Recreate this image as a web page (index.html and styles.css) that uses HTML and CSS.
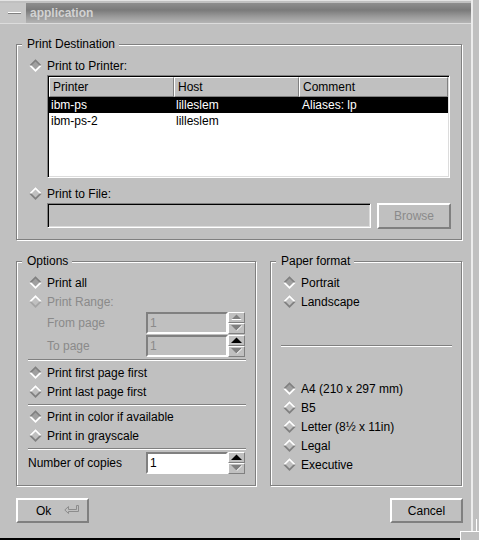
FILE: index.html
```html
<!DOCTYPE html>
<html>
<head>
<meta charset="utf-8">
<title>application</title>
<link rel="stylesheet" href="styles.css">
</head>
<body>
<svg class="defs" width="0" height="0" aria-hidden="true">
  <defs>
    <symbol id="r-on" viewBox="0 0 13 13">
      <polygon points="0,6.5 6.5,0 13,6.5 6.5,13" fill="#ffffff"/>
      <polygon points="0,6.5 6.5,0 13,6.5" fill="#808080"/>
      <polygon points="2.5,6.5 6.5,2.5 10.5,6.5 6.5,10.5" fill="#a0a0a0"/>
    </symbol>
    <symbol id="r-off" viewBox="0 0 13 13">
      <polygon points="0,6.5 6.5,0 13,6.5 6.5,13" fill="#808080"/>
      <polygon points="0,6.5 6.5,0 13,6.5" fill="#ffffff"/>
      <polygon points="2.5,6.5 6.5,2.5 10.5,6.5 6.5,10.5" fill="#c0c0c0"/>
    </symbol>
    <symbol id="r-dis" viewBox="0 0 13 13">
      <polygon points="0,6.5 6.5,0 13,6.5 6.5,13" fill="#a4a4a4"/>
      <polygon points="0,6.5 6.5,0 13,6.5" fill="#ffffff"/>
      <polygon points="2.5,6.5 6.5,2.5 10.5,6.5 6.5,10.5" fill="#c0c0c0"/>
    </symbol>
    <symbol id="t-up" viewBox="0 0 11 6">
      <polygon points="0,6 5.5,0.5 11,6" fill="#808080"/>
      <polyline points="0.5,5.5 10.5,5.5" stroke="#ffffff" fill="none"/>
    </symbol>
    <symbol id="t-up-on" viewBox="0 0 11 6">
      <polygon points="0,6 5.5,0.5 11,6" fill="#000000"/>
    </symbol>
    <symbol id="t-down" viewBox="0 0 11 6">
      <polygon points="0,0 11,0 5.5,5.5" fill="#808080"/>
      <polyline points="11,0.5 5.5,5.8" stroke="#ffffff" fill="none"/>
    </symbol>
  </defs>
</svg>

<div class="window">
  <div class="main">
    <div class="titlebar">
      <div class="tb-menu"><span class="tb-dash"></span></div>
      <div class="tb-title">application</div>
    </div>

    <div class="client">
      <div class="group g-dest">
        <span class="legend">Print Destination</span>
        <div class="radio"><svg class="rd"><use href="#r-on"/></svg><span>Print to Printer:</span></div>
        <div class="list sunken">
          <div class="lhead">
            <div class="hcell c1">Printer</div>
            <div class="hcell c2">Host</div>
            <div class="hcell c3">Comment</div>
          </div>
          <div class="lrow sel"><span class="c1">ibm-ps</span><span class="c2">lilleslem</span><span class="c3">Aliases: lp</span></div>
          <div class="lrow"><span class="c1">ibm-ps-2</span><span class="c2">lilleslem</span><span class="c3"></span></div>
        </div>
        <div class="radio r-file"><svg class="rd"><use href="#r-off"/></svg><span>Print to File:</span></div>
        <div class="file-row">
          <div class="file-field sunken"></div>
          <div class="btn browse">Browse</div>
        </div>
      </div>

      <div class="lower">
        <div class="group g-opts">
          <span class="legend">Options</span>
          <div class="radio"><svg class="rd"><use href="#r-on"/></svg><span>Print all</span></div>
          <div class="radio dis"><svg class="rd"><use href="#r-dis"/></svg><span>Print Range:</span></div>
          <div class="spinrow">
            <span class="lbl dis">From page</span>
            <div class="field dis">1</div>
            <div class="spin">
              <div class="sbtn"><svg class="tri"><use href="#t-up"/></svg></div>
              <div class="sbtn"><svg class="tri"><use href="#t-down"/></svg></div>
            </div>
          </div>
          <div class="spinrow">
            <span class="lbl dis">To page</span>
            <div class="field dis">1</div>
            <div class="spin">
              <div class="sbtn"><svg class="tri"><use href="#t-up-on"/></svg></div>
              <div class="sbtn"><svg class="tri"><use href="#t-down"/></svg></div>
            </div>
          </div>
          <div class="sep s1"></div>
          <div class="radio"><svg class="rd"><use href="#r-on"/></svg><span>Print first page first</span></div>
          <div class="radio"><svg class="rd"><use href="#r-off"/></svg><span>Print last page first</span></div>
          <div class="sep s2"></div>
          <div class="radio"><svg class="rd"><use href="#r-on"/></svg><span>Print in color if available</span></div>
          <div class="radio"><svg class="rd"><use href="#r-off"/></svg><span>Print in grayscale</span></div>
          <div class="sep s2"></div>
          <div class="spinrow copies">
            <span class="lbl">Number of copies</span>
            <div class="field white">1</div>
            <div class="spin">
              <div class="sbtn"><svg class="tri"><use href="#t-up-on"/></svg></div>
              <div class="sbtn"><svg class="tri"><use href="#t-down"/></svg></div>
            </div>
          </div>
        </div>

        <div class="group g-paper">
          <span class="legend">Paper format</span>
          <div class="radio"><svg class="rd"><use href="#r-on"/></svg><span>Portrait</span></div>
          <div class="radio"><svg class="rd"><use href="#r-off"/></svg><span>Landscape</span></div>
          <div class="sep sp"></div>
          <div class="radio"><svg class="rd"><use href="#r-on"/></svg><span>A4 (210 x 297 mm)</span></div>
          <div class="radio"><svg class="rd"><use href="#r-off"/></svg><span>B5</span></div>
          <div class="radio"><svg class="rd"><use href="#r-off"/></svg><span>Letter (8½ x 11in)</span></div>
          <div class="radio"><svg class="rd"><use href="#r-off"/></svg><span>Legal</span></div>
          <div class="radio"><svg class="rd"><use href="#r-off"/></svg><span>Executive</span></div>
        </div>
      </div>

      <div class="buttons">
        <div class="btn ok"><span>Ok</span>
          <svg class="ret" width="16" height="10" viewBox="0 0 16 10"><path d="M4.5 1.5 L0.8 5 L4.5 8.5 V6.5 H14.5 V0.5 H12.5 V4.5 H4.5 Z" fill="none" stroke="#8c8c8c" stroke-width="1"/></svg>
        </div>
        <div class="btn cancel">Cancel</div>
      </div>
    </div>
  </div>
  <div class="rframe"></div>
</div>
</body>
</html>
```

FILE: styles.css
```css
* { box-sizing: border-box; }

html, body {
  margin: 0;
  padding: 0;
}

body {
  width: 479px;
  height: 540px;
  overflow: hidden;
  background: #c0c0c0;
  font-family: "Liberation Sans", Arial, sans-serif;
  font-size: 12px;
  color: #000;
}

.defs {
  position: absolute;
  width: 0;
  height: 0;
}

.window {
  position: relative;
  display: flex;
  width: 479px;
  height: 540px;
  border-bottom: 2px solid #000;
}

/* resize grip corner of the frame */
.window::before {
  content: "";
  position: absolute;
  left: 476px;
  top: 519px;
  width: 1px;
  height: 12px;
  background: #fff;
}
.window::after {
  content: "";
  position: absolute;
  left: 460px;
  top: 531px;
  width: 19px;
  height: 9px;
  background: #c0c0c0;
  border-top: 1px solid #fff;
  border-left: 1px solid #fff;
}

.main {
  width: 471px;
  border-top: 1px solid #e4e4e4;
  padding-top: 2px;
  display: flex;
  flex-direction: column;
}

.rframe {
  width: 8px;
  border-left: 2px solid #ececec;
}

/* title bar */
.titlebar {
  display: flex;
  height: 21px;
  border-bottom: 1px solid #dcdcdc;
}
.tb-menu {
  width: 26px;
  background: #c6c6c6;
  padding: 9px 0 0 8px;
}
.tb-dash {
  display: block;
  width: 13px;
  height: 2px;
  border-top: 1px solid #fff;
  border-bottom: 1px solid #808080;
}
.tb-title {
  flex: 1;
  background: linear-gradient(to bottom, #8e8e8e 0%, #7a7a7a 35%, #9c9c9c 70%, #b4b4b4 100%);
  color: #d2d2d2;
  font-weight: bold;
  line-height: 20px;
  padding-left: 4px;
}

.client {
  padding: 20px 0 0 16px;
}

/* group boxes */
.group {
  position: relative;
  border: 1px solid #808080;
  box-shadow: inset 1px 1px 0 #fff, 1px 1px 0 #fff;
}
.legend {
  position: absolute;
  top: -8px;
  left: 5px;
  padding: 0 4px 0 5px;
  background: #c0c0c0;
  line-height: 14px;
  white-space: nowrap;
}

.g-dest {
  width: 446px;
  height: 196px;
  padding: 11px 0 0 12px;
}

.radio {
  display: flex;
  align-items: center;
  height: 19px;
  white-space: nowrap;
}
.rd {
  width: 13px;
  height: 13px;
  margin-right: 5px;
  flex: none;
}
.dis { color: #8a8a8a; }

/* sunken frame */
.sunken {
  border: 1px solid;
  border-color: #808080 #fff #fff #808080;
  box-shadow: inset 1px 1px 0 #000, inset -1px -1px 0 #dcdcdc;
}

.list {
  margin-left: 18px;
  width: 403px;
  height: 103px;
  padding: 1px;
  background: #fff;
}
.lhead {
  display: flex;
  height: 20px;
}
.hcell {
  border: 1px solid;
  border-color: #fff #808080 #808080 #fff;
  background: #c0c0c0;
  padding-left: 3px;
  line-height: 18px;
}
.c1 { width: 125px; }
.c2 { width: 125px; }
.c3 { width: 149px; }
.lrow {
  display: flex;
  height: 16px;
  line-height: 16px;
  white-space: nowrap;
}
.lrow span { padding-left: 2px; }
.lrow .c3 { padding-left: 3px; }
.lrow.sel {
  background: #000;
  color: #fff;
}

.r-file { margin-top: 6px; }

.file-row {
  display: flex;
  align-items: flex-start;
  margin-left: 18px;
  height: 26px;
}
.file-field {
  width: 324px;
  height: 25px;
  background: #c0c0c0;
}

.btn {
  display: flex;
  align-items: center;
  justify-content: center;
  border: 2px solid;
  border-color: #fff #808080 #808080 #fff;
  background: #c0c0c0;
  white-space: nowrap;
}
.browse {
  width: 74px;
  height: 26px;
  margin-left: 6px;
  color: #8a8a8a;
}

/* lower groups */
.lower {
  display: flex;
  gap: 14px;
  margin-top: 21px;
}
.g-opts {
  width: 240px;
  height: 225px;
  padding: 11px 9px 0 12px;
}
.g-paper {
  width: 192px;
  height: 225px;
  padding: 11px 9px 0 12px;
}

.spinrow {
  display: flex;
  align-items: center;
  height: 23px;
  white-space: nowrap;
}
.spinrow .lbl {
  width: 99px;
  margin-left: 18px;
}
.spinrow.copies .lbl {
  width: 118px;
  margin-left: -1px;
}
.field {
  width: 82px;
  height: 22px;
  border: 2px solid;
  border-color: #808080 #fff #fff #808080;
  padding-left: 2px;
  line-height: 18px;
  background: #c0c0c0;
}
.field.white { background: #fff; }
.spin {
  display: flex;
  flex-direction: column;
  width: 17px;
}
.sbtn {
  height: 11px;
  border: 1px solid;
  border-color: #fff #808080 #808080 #fff;
  display: flex;
  align-items: center;
  justify-content: center;
}
.tri {
  width: 11px;
  height: 6px;
}

.sep {
  height: 2px;
  border-top: 1px solid #808080;
  border-bottom: 1px solid #fff;
}
.g-opts .sep { margin-left: -1px; }
.s1 { margin-top: 2px; margin-bottom: 2px; }
.s2 { margin-top: 3px; margin-bottom: 1px; }
.sp {
  margin: 34px 0 32px -2px;
}

/* dialog buttons */
.buttons {
  display: flex;
  justify-content: space-between;
  width: 447px;
  margin-top: 12px;
}
.ok, .cancel {
  width: 73px;
  height: 25px;
}
.ok {
  justify-content: flex-start;
  padding-left: 18px;
}
.ret {
  margin-left: 13px;
  margin-top: -1px;
}
```
